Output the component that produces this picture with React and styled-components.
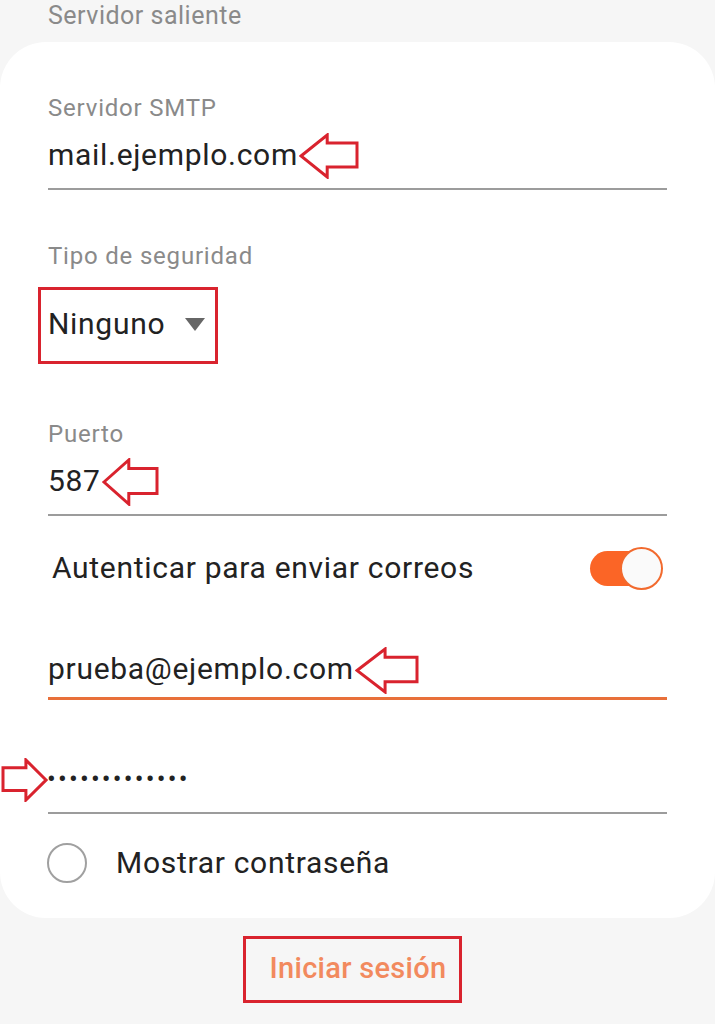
import React from "react";
import styled, { createGlobalStyle } from "styled-components";

const GlobalStyle = createGlobalStyle`
    body {
        margin: 0;
        background: #f6f6f6;
        font-family: Roboto, "Liberation Sans", Arial, sans-serif;
        -webkit-font-smoothing: antialiased;
    }
`;

function Arrow({ width, height, flip }) {
    // outline arrow, tip on the left unless flipped
    const w = width;
    const h = height;
    const head = w * 0.47;
    const shaftTop = h * 0.22;
    const shaftBottom = h * 0.74;
    const points = [
        [2, h / 2],
        [head, 2],
        [head, shaftTop],
        [w - 2, shaftTop],
        [w - 2, shaftBottom],
        [head, shaftBottom],
        [head, h - 2],
    ]
        .map(([x, y]) => `${flip ? w - x : x},${y}`)
        .join(" ");
    return (
        <svg width={w} height={h} viewBox={`0 0 ${w} ${h}`}>
            <polygon
                points={points}
                fill="#ffffff"
                stroke="#d9232e"
                strokeWidth="3"
                strokeLinejoin="miter"
            />
        </svg>
    );
}

function App() {
    return (
        <>
            <GlobalStyle />
            <Page>
                <Header>Servidor saliente</Header>
                <Card>
                    <Field>
                        <Label>Servidor SMTP</Label>
                        <ValueRow>
                            <Value>mail.ejemplo.com</Value>
                            <ArrowSlot>
                                <Arrow width={60} height={46} />
                            </ArrowSlot>
                        </ValueRow>
                    </Field>

                    <Label top={52}>Tipo de seguridad</Label>
                    <SelectBox>
                        <Value>Ninguno</Value>
                        <Caret />
                    </SelectBox>

                    <Field top={56}>
                        <Label>Puerto</Label>
                        <ValueRow>
                            <Value>587</Value>
                            <ArrowSlot>
                                <Arrow width={57} height={48} />
                            </ArrowSlot>
                        </ValueRow>
                    </Field>

                    <ToggleRow>
                        <RowText>Autenticar para enviar correos</RowText>
                        <Switch>
                            <Thumb />
                        </Switch>
                    </ToggleRow>

                    <Field top={29} active>
                        <ValueRow tight>
                            <Value>prueba@ejemplo.com</Value>
                            <ArrowSlot>
                                <Arrow width={64} height={47} />
                            </ArrowSlot>
                        </ValueRow>
                    </Field>

                    <Field top={59}>
                        <ValueRow tight>
                            <PasswordArrow>
                                <Arrow width={47} height={44} flip />
                            </PasswordArrow>
                            <Dots>•••••••••••••</Dots>
                        </ValueRow>
                    </Field>

                    <RadioRow>
                        <Radio />
                        <RowText>Mostrar contraseña</RowText>
                    </RadioRow>
                </Card>
                <Footer>
                    <SignIn>Iniciar sesión</SignIn>
                </Footer>
            </Page>
        </>
    );
}

export default App;

const Page = styled.div`
    width: 715px;
    height: 1024px;
    overflow: hidden;
    background: #f6f6f6;
`;

const Header = styled.div`
    padding: 1px 48px 11px;
    font-size: 25px;
    line-height: 30px;
    letter-spacing: 0.5px;
    color: #8a8a8a;
`;

const Card = styled.div`
    background: #ffffff;
    border-radius: 46px;
    padding: 52px 48px 6px;
    display: flex;
    flex-direction: column;
`;

const Field = styled.div`
    margin-top: ${(props) => props.top || 0}px;
    border-bottom: ${(props) =>
        props.active ? "3px solid #e8703a" : "2px solid #9c9c9c"};
    padding-bottom: ${(props) => (props.active ? 8 : 13)}px;
`;

const Label = styled.div`
    margin-top: ${(props) => props.top || 0}px;
    font-size: 24px;
    line-height: 28px;
    letter-spacing: 0.8px;
    color: #8a8a8a;
`;

const ValueRow = styled.div`
    position: relative;
    display: flex;
    align-items: center;
    height: 40px;
    margin-top: ${(props) => (props.tight ? 0 : 13)}px;
`;

const Value = styled.span`
    font-size: 30px;
    line-height: 40px;
    letter-spacing: 0.7px;
    color: #222222;
`;

const ArrowSlot = styled.span`
    display: flex;
    margin-left: 1px;
    margin-top: 2px;
`;

const PasswordArrow = styled.span`
    position: absolute;
    left: -47px;
    top: -1px;
    display: flex;
`;

const Dots = styled.span`
    font-size: 26px;
    line-height: 40px;
    letter-spacing: 2.2px;
    color: #222222;
    margin-left: -1px;
`;

const SelectBox = styled.div`
    margin: 17px 0 0 -10px;
    width: 167px;
    height: 67px;
    padding: 0 0 4px 7px;
    border: 3px solid #d9232e;
    display: flex;
    align-items: center;
    box-sizing: content-box;
`;

const Caret = styled.span`
    margin-left: 20px;
    margin-top: 2px;
    width: 0;
    height: 0;
    border-left: 10px solid transparent;
    border-right: 10px solid transparent;
    border-top: 13px solid #666666;
`;

const ToggleRow = styled.div`
    height: 104px;
    display: flex;
    align-items: center;
    justify-content: space-between;
    padding-left: 4px;
`;

const RowText = styled.span`
    font-size: 30px;
    line-height: 40px;
    letter-spacing: 0.7px;
    color: #222222;
`;

const Switch = styled.div`
    position: relative;
    width: 72px;
    height: 35px;
    margin-right: 5px;
    border-radius: 18px;
    background: #fb6526;
    display: flex;
    align-items: center;
    justify-content: flex-end;
`;

const Thumb = styled.div`
    width: 39px;
    height: 39px;
    border-radius: 50%;
    background: #fafafa;
    border: 2px solid #f26a2e;
    margin-right: -1px;
`;

const RadioRow = styled.div`
    height: 98px;
    display: flex;
    align-items: center;
    gap: 29px;
`;

const Radio = styled.span`
    width: 36px;
    height: 36px;
    margin-left: -1px;
    border-radius: 50%;
    border: 2px solid #a0a0a0;
`;

const Footer = styled.div`
    display: flex;
    justify-content: center;
    padding-top: 18px;
`;

const SignIn = styled.button`
    margin-right: 10px;
    height: 67px;
    padding: 0 13px 4px 24px;
    border: 3px solid #d9232e;
    background: transparent;
    font-family: Roboto, "Liberation Sans", Arial, sans-serif;
    font-size: 29px;
    font-weight: 500;
    letter-spacing: 0.3px;
    color: #f28a5e;
    box-sizing: border-box;
`;
